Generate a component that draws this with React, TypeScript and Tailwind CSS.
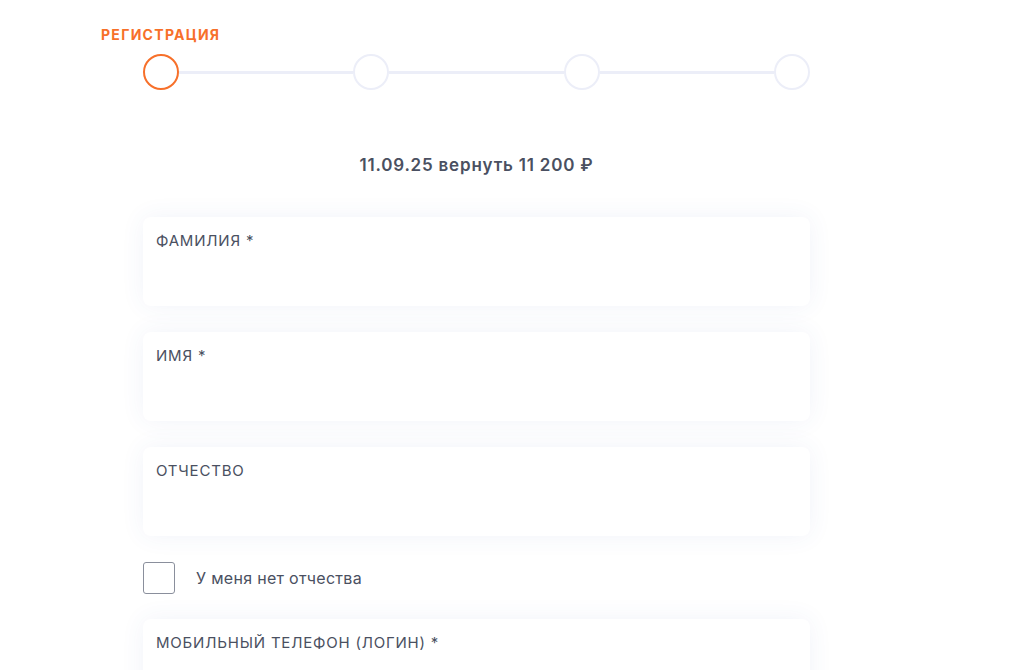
import React from "react";

const font = { fontFamily: '"Inter", "Noto Sans", sans-serif' };

function Field({ label }: { label: string }) {
  return (
    <div className="h-[89px] w-full rounded-lg bg-white px-[13px] pt-[15px] shadow-[0_0_24px_rgba(60,80,170,0.07)]">
      <div className="text-[15px] leading-[18px] tracking-[0.8px] text-[#4a5061]">{label}</div>
    </div>
  );
}

export default function App() {
  return (
    <div className="min-h-[670px] w-full bg-white" style={font}>
      <div className="pl-[101px] pt-[26px]">
        <div className="text-[14px] font-bold leading-[18px] tracking-[1.3px] text-[#f7702a]">РЕГИСТРАЦИЯ</div>
      </div>
      <div className="ml-[143px] w-[667px]">
        <div className="mt-[10px] flex items-center">
          <div className="h-[36px] w-[36px] shrink-0 rounded-full border-2 border-[#f7702a] bg-white" />
          <div className="h-[3px] flex-1 bg-[#eceef8]" />
          <div className="h-[36px] w-[36px] shrink-0 rounded-full border-2 border-[#eceef8] bg-white" />
          <div className="h-[3px] flex-1 bg-[#eceef8]" />
          <div className="h-[36px] w-[36px] shrink-0 rounded-full border-2 border-[#eceef8] bg-white" />
          <div className="h-[3px] flex-1 bg-[#eceef8]" />
          <div className="h-[36px] w-[36px] shrink-0 rounded-full border-2 border-[#eceef8] bg-white" />
        </div>
        <div className="mt-[64px] text-center text-[17px] font-semibold leading-[22px] tracking-[0.8px] text-[#4a5061]">
          11.09.25 вернуть 11 200 ₽
        </div>
        <div className="mt-[41px] flex flex-col gap-[26px]">
          <Field label="ФАМИЛИЯ *" />
          <Field label="ИМЯ *" />
          <Field label="ОТЧЕСТВО" />
        </div>
        <div className="mt-[26px] flex items-center">
          <div className="h-[32px] w-[32px] rounded-[3px] border border-[#8a8f9c] bg-white" />
          <div className="ml-[21px] text-[16px] tracking-[0.3px] text-[#4a5061]">У меня нет отчества</div>
        </div>
        <div className="mt-[25px]">
          <Field label="МОБИЛЬНЫЙ ТЕЛЕФОН (ЛОГИН) *" />
        </div>
      </div>
    </div>
  );
}
